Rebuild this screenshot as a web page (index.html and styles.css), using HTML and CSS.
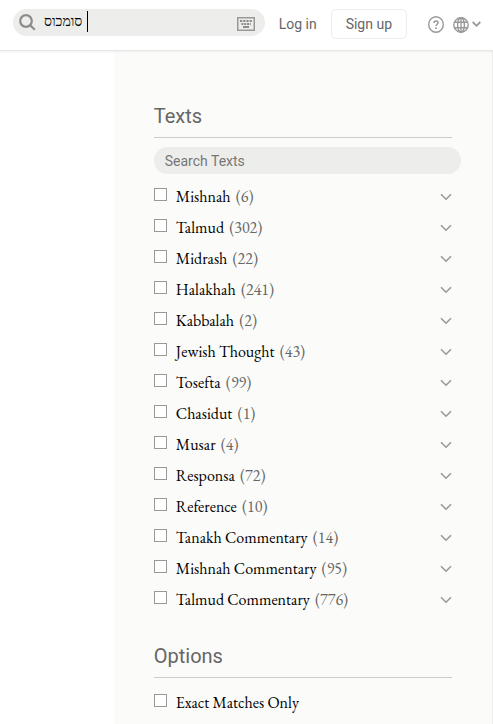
FILE: index.html
```
<!DOCTYPE html>
<html lang="en">
<head>
  <meta charset="utf-8">
  <title>Search</title>
  <link rel="stylesheet" href="styles.css">
</head>
<body>
  <svg class="defs" aria-hidden="true">
    <symbol id="chevron" viewBox="0 0 12 8">
      <path d="M1 1.2 L6 6.2 L11 1.2" fill="none" stroke="#999" stroke-width="1.6"/>
    </symbol>
  </svg>

  <header class="header">
    <div class="search">
      <button class="iconButton" type="button" aria-label="Search">
        <svg width="17" height="17" viewBox="0 0 17 17" fill="none" stroke="#8c8c8b" stroke-width="2.2">
          <circle cx="7" cy="7" r="5.8"/>
          <path d="M11.2 11.2 L15.8 15.8"/>
        </svg>
      </button>
      <div class="searchField">
        <input class="searchInput" type="text" aria-label="Search" value="סומכוס ">
        <span class="caret"></span>
      </div>
      <button class="iconButton keyboard" type="button" aria-label="Keyboard">
        <svg width="18" height="14" viewBox="0 0 18 14">
          <rect x="0.75" y="0.75" width="16.5" height="12.5" fill="none" stroke="#999" stroke-width="1.5"/>
          <path d="M3 4h12" stroke="#8c8c8b" stroke-width="2" stroke-dasharray="2.2 1"/>
          <path d="M4.4 7h9.4" stroke="#8c8c8b" stroke-width="2" stroke-dasharray="2 0.8"/>
          <path d="M6 10h6" stroke="#8c8c8b" stroke-width="2"/>
        </svg>
      </button>
    </div>
    <a class="login" href="#">Log in</a>
    <a class="signup" href="#">Sign up</a>
    <a class="help" href="#" aria-label="Help">
      <svg width="16" height="17" viewBox="0 0 16 17" fill="none" stroke="#999" stroke-width="1.4">
        <ellipse cx="8" cy="8.5" rx="7.3" ry="7.8"/>
        <path d="M6 6.9 C6 4.3 10.1 4.3 10.1 6.8 C10.1 8.3 8 8.3 8 10.1" stroke-width="1.5"/>
        <path d="M8 11.3v1.6" stroke-width="1.6"/>
      </svg>
    </a>
    <button class="language" type="button" aria-label="Language">
      <svg width="16" height="16" viewBox="0 0 16 16" fill="none" stroke="#999" stroke-width="1.4">
        <circle cx="8" cy="8" r="7.2"/>
        <ellipse cx="8" cy="8" rx="3.4" ry="7.2"/>
        <path d="M1.4 5.3h13.2M1.4 10.7h13.2M8 0.8v14.4"/>
      </svg>
      <svg width="9" height="8" viewBox="0 0 9 8" fill="none" stroke="#999" stroke-width="1.8">
        <path d="M0.7 1 L4.5 4.8 L8.3 1"/>
      </svg>
    </button>
  </header>

  <main class="content">
    <section class="results"></section>
    <aside class="filters">
      <h2>Texts</h2>
      <input class="filterSearch" type="text" placeholder="Search Texts" aria-label="Search Texts">
      <ul class="filterList">
        <li><label><input type="checkbox"><span>Mishnah <span class="count">(6)</span></span></label><button type="button" aria-label="Expand Mishnah"><svg width="12" height="8"><use href="#chevron"/></svg></button></li>
        <li><label><input type="checkbox"><span>Talmud <span class="count">(302)</span></span></label><button type="button" aria-label="Expand Talmud"><svg width="12" height="8"><use href="#chevron"/></svg></button></li>
        <li><label><input type="checkbox"><span>Midrash <span class="count">(22)</span></span></label><button type="button" aria-label="Expand Midrash"><svg width="12" height="8"><use href="#chevron"/></svg></button></li>
        <li><label><input type="checkbox"><span>Halakhah <span class="count">(241)</span></span></label><button type="button" aria-label="Expand Halakhah"><svg width="12" height="8"><use href="#chevron"/></svg></button></li>
        <li><label><input type="checkbox"><span>Kabbalah <span class="count">(2)</span></span></label><button type="button" aria-label="Expand Kabbalah"><svg width="12" height="8"><use href="#chevron"/></svg></button></li>
        <li><label><input type="checkbox"><span>Jewish Thought <span class="count">(43)</span></span></label><button type="button" aria-label="Expand Jewish Thought"><svg width="12" height="8"><use href="#chevron"/></svg></button></li>
        <li><label><input type="checkbox"><span>Tosefta <span class="count">(99)</span></span></label><button type="button" aria-label="Expand Tosefta"><svg width="12" height="8"><use href="#chevron"/></svg></button></li>
        <li><label><input type="checkbox"><span>Chasidut <span class="count">(1)</span></span></label><button type="button" aria-label="Expand Chasidut"><svg width="12" height="8"><use href="#chevron"/></svg></button></li>
        <li><label><input type="checkbox"><span>Musar <span class="count">(4)</span></span></label><button type="button" aria-label="Expand Musar"><svg width="12" height="8"><use href="#chevron"/></svg></button></li>
        <li><label><input type="checkbox"><span>Responsa <span class="count">(72)</span></span></label><button type="button" aria-label="Expand Responsa"><svg width="12" height="8"><use href="#chevron"/></svg></button></li>
        <li><label><input type="checkbox"><span>Reference <span class="count">(10)</span></span></label><button type="button" aria-label="Expand Reference"><svg width="12" height="8"><use href="#chevron"/></svg></button></li>
        <li><label><input type="checkbox"><span>Tanakh Commentary <span class="count">(14)</span></span></label><button type="button" aria-label="Expand Tanakh Commentary"><svg width="12" height="8"><use href="#chevron"/></svg></button></li>
        <li><label><input type="checkbox"><span>Mishnah Commentary <span class="count">(95)</span></span></label><button type="button" aria-label="Expand Mishnah Commentary"><svg width="12" height="8"><use href="#chevron"/></svg></button></li>
        <li><label><input type="checkbox"><span>Talmud Commentary <span class="count">(776)</span></span></label><button type="button" aria-label="Expand Talmud Commentary"><svg width="12" height="8"><use href="#chevron"/></svg></button></li>
      </ul>
      <h2>Options</h2>
      <ul class="filterList">
        <li><label><input type="checkbox"><span>Exact Matches Only</span></label></li>
      </ul>
    </aside>
  </main>
</body>
</html>
```

FILE: styles.css
```
* {
  box-sizing: border-box;
}

body {
  margin: 0;
  min-height: 100vh;
  display: flex;
  flex-direction: column;
  background: #fff;
  font-family: Roboto, sans-serif;
  font-size: 14px;
  color: #666;
}

button {
  padding: 0;
  border: 0;
  background: none;
  cursor: pointer;
}

svg {
  display: block;
}

a {
  color: #666;
  text-decoration: none;
}

.defs {
  position: absolute;
  width: 0;
  height: 0;
}

.header {
  position: relative;
  display: flex;
  align-items: flex-start;
  height: 51px;
  padding: 9px 12px 0 13px;
  border-bottom: 1px solid #e6e6e6;
  box-shadow: 0 1px 2px rgba(0, 0, 0, 0.06);
}

.search {
  flex: 1;
  display: flex;
  align-items: center;
  height: 27px;
  padding: 0 10px 0 6px;
  border-radius: 14px;
  background: #ededec;
}

.searchField {
  position: relative;
  flex: 1;
  margin-left: 8px;
}

.searchInput {
  display: block;
  width: 100%;
  height: 27px;
  padding: 0 0 2px;
  border: 0;
  outline: 0;
  background: none;
  font-family: "Liberation Serif", serif;
  font-size: 14px;
  color: #000;
}

/* text cursor after the typed word */
.caret {
  position: absolute;
  top: 2px;
  left: 43px;
  width: 1px;
  height: 21px;
  background: #000;
}

.keyboard {
  padding-top: 2px;
}

.login {
  margin-left: 14px;
  line-height: 30px;
}

.signup {
  height: 30px;
  margin-left: 14px;
  padding: 0 14px;
  border: 1px solid #ededec;
  border-radius: 5px;
  line-height: 28px;
}

.help {
  margin: 7px 0 0 21px;
}

.language {
  display: flex;
  align-items: center;
  gap: 3px;
  margin: 8px 0 0 9px;
}

.content {
  flex: 1;
  display: grid;
  grid-template-columns: 3fr 10fr;
}

.filters {
  padding: 53px 40px 0;
  border-right: 1px solid #ededec;
  background: #fbfbfa;
}

.filters h2 {
  margin: 0 0 9px;
  padding-bottom: 9px;
  border-bottom: 1px solid #ccc;
  font-size: 20px;
  font-weight: normal;
  line-height: 24px;
}

.filterSearch {
  display: block;
  width: calc(100% + 9px);
  height: 27px;
  margin-bottom: 7px;
  padding: 0 11px;
  border: 0;
  border-radius: 14px;
  background: #ededec;
  font-family: inherit;
  font-size: 14px;
}

.filterSearch::placeholder {
  color: #777;
}

.filterList {
  margin: 0 0 29px;
  padding: 0;
  list-style: none;
  font-family: "EB Garamond", "Liberation Serif", serif;
  font-size: 16px;
  color: #000;
}

.filterList:last-child {
  margin-bottom: 0;
}

.filterList li {
  display: flex;
  align-items: center;
  justify-content: space-between;
  height: 31px;
}

.filterList label {
  display: flex;
  align-items: center;
  gap: 9px;
}

.filterList input {
  appearance: none;
  width: 13px;
  height: 13px;
  margin: 0 0 4px;
  border: 1px solid #999;
  background: #fff;
}

.count {
  margin-left: 2px;
  color: #666;
}
```
